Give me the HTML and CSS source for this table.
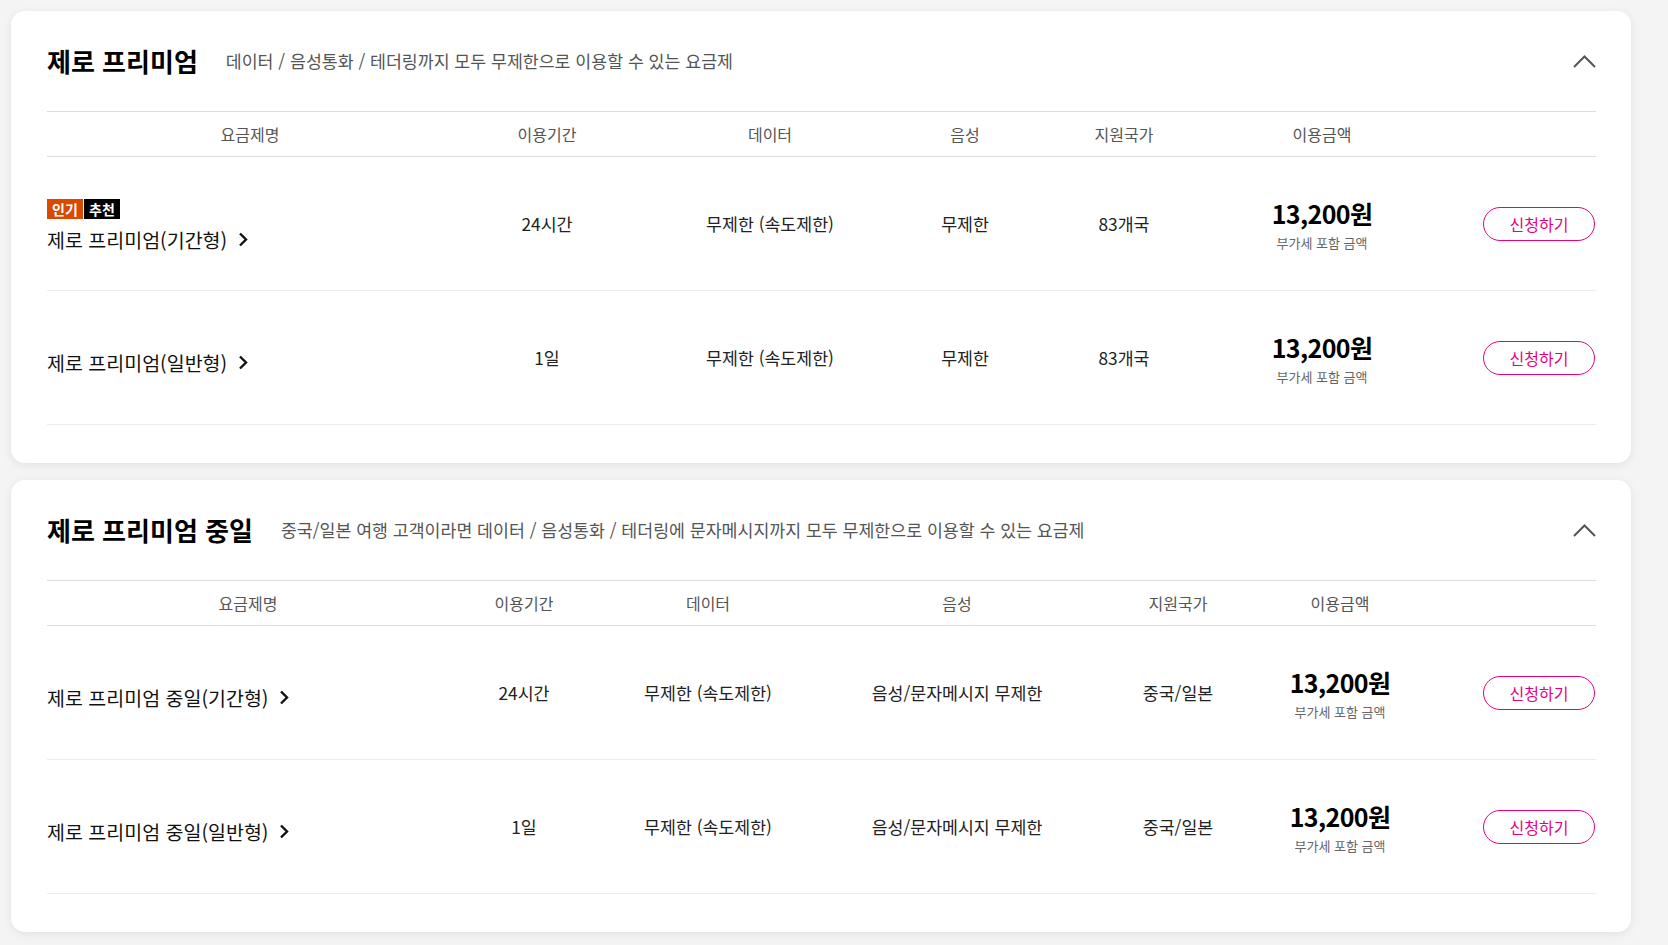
FILE: index.html
```html
<!DOCTYPE html>
<html lang="ko">
<head>
<meta charset="utf-8">
<title>제로 프리미엄 요금제</title>
<link rel="stylesheet" href="styles.css">
</head>
<body class="page">
<section class="plan-card">
  <div class="plan-head">
    <h2 class="plan-title">제로 프리미엄</h2>
    <p class="plan-desc">데이터 / 음성통화 / 테더링까지 모두 무제한으로 이용할 수 있는 요금제</p>
    <button class="toggle" type="button" aria-label="접기">
      <svg width="23" height="13" viewBox="0 0 23 13"><path d="M1 12 L11.5 1.5 L22 12" fill="none" stroke="#555" stroke-width="2"/></svg>
    </button>
  </div>
  <table class="plan-table t1">
    <colgroup><col class="a"><col class="b"><col class="c"><col class="d"><col class="e"><col class="f"><col class="g"></colgroup>
    <thead>
      <tr><th>요금제명</th><th>이용기간</th><th>데이터</th><th>음성</th><th>지원국가</th><th>이용금액</th><th></th></tr>
    </thead>
    <tbody>
      <tr>
        <td class="name-cell has-badge">
          <div class="badges"><span class="badge hot">인기</span><span class="badge rec">추천</span></div>
          <a class="plan-name" href="#">제로 프리미엄(기간형)<svg class="arrow" width="10" height="15" viewBox="0 0 10 15"><path d="M2 1.5 L8 7.5 L2 13.5" fill="none" stroke="#111" stroke-width="2.4"/></svg></a>
        </td>
        <td>24시간</td><td>무제한 (속도제한)</td><td>무제한</td><td>83개국</td>
        <td class="price-cell"><div class="price">13,200원</div><div class="vat">부가세 포함 금액</div></td>
        <td class="btn-cell"><button class="apply" type="button">신청하기</button></td>
      </tr>
      <tr>
        <td class="name-cell">
          <a class="plan-name" href="#">제로 프리미엄(일반형)<svg class="arrow" width="10" height="15" viewBox="0 0 10 15"><path d="M2 1.5 L8 7.5 L2 13.5" fill="none" stroke="#111" stroke-width="2.4"/></svg></a>
        </td>
        <td>1일</td><td>무제한 (속도제한)</td><td>무제한</td><td>83개국</td>
        <td class="price-cell"><div class="price">13,200원</div><div class="vat">부가세 포함 금액</div></td>
        <td class="btn-cell"><button class="apply" type="button">신청하기</button></td>
      </tr>
    </tbody>
  </table>
</section>

<section class="plan-card">
  <div class="plan-head">
    <h2 class="plan-title">제로 프리미엄 중일</h2>
    <p class="plan-desc">중국/일본 여행 고객이라면 데이터 / 음성통화 / 테더링에 문자메시지까지 모두 무제한으로 이용할 수 있는 요금제</p>
    <button class="toggle" type="button" aria-label="접기">
      <svg width="23" height="13" viewBox="0 0 23 13"><path d="M1 12 L11.5 1.5 L22 12" fill="none" stroke="#555" stroke-width="2"/></svg>
    </button>
  </div>
  <table class="plan-table t2">
    <colgroup><col class="a"><col class="b"><col class="c"><col class="d"><col class="e"><col class="f"><col class="g"></colgroup>
    <thead>
      <tr><th>요금제명</th><th>이용기간</th><th>데이터</th><th>음성</th><th>지원국가</th><th>이용금액</th><th></th></tr>
    </thead>
    <tbody>
      <tr>
        <td class="name-cell">
          <a class="plan-name" href="#">제로 프리미엄 중일(기간형)<svg class="arrow" width="10" height="15" viewBox="0 0 10 15"><path d="M2 1.5 L8 7.5 L2 13.5" fill="none" stroke="#111" stroke-width="2.4"/></svg></a>
        </td>
        <td>24시간</td><td>무제한 (속도제한)</td><td>음성/문자메시지 무제한</td><td>중국/일본</td>
        <td class="price-cell"><div class="price">13,200원</div><div class="vat">부가세 포함 금액</div></td>
        <td class="btn-cell"><button class="apply" type="button">신청하기</button></td>
      </tr>
      <tr>
        <td class="name-cell">
          <a class="plan-name" href="#">제로 프리미엄 중일(일반형)<svg class="arrow" width="10" height="15" viewBox="0 0 10 15"><path d="M2 1.5 L8 7.5 L2 13.5" fill="none" stroke="#111" stroke-width="2.4"/></svg></a>
        </td>
        <td>1일</td><td>무제한 (속도제한)</td><td>음성/문자메시지 무제한</td><td>중국/일본</td>
        <td class="price-cell"><div class="price">13,200원</div><div class="vat">부가세 포함 금액</div></td>
        <td class="btn-cell"><button class="apply" type="button">신청하기</button></td>
      </tr>
    </tbody>
  </table>
</section>
</body>
</html>
```

FILE: styles.css
```css
html, body {
  height: 100%;
}
.page {
  margin: 0;
  padding: 11px 37px 13px 11px;
  background: #f4f4f4;
  font-family: "Noto Sans CJK KR", "Noto Sans", sans-serif;
  color: #222;
  box-sizing: border-box;
  display: flex;
  flex-direction: column;
  gap: 17px;
}
.plan-card {
  background: #fff;
  border-radius: 14px;
  box-shadow: 0 2px 10px rgba(0, 0, 0, 0.08);
  padding: 0 35px 38px 36px;
}
.plan-head {
  height: 100px;
  display: flex;
  align-items: center;
  gap: 28px;
}
.plan-title {
  margin: 0;
  font-size: 26px;
  font-weight: 700;
  color: #000;
  line-height: 36px;
}
.plan-desc {
  margin: 0;
  font-size: 17.3px;
  color: #555;
  line-height: 26px;
}
.toggle {
  margin-left: auto;
  border: 0;
  background: none;
  padding: 0;
  display: flex;
  cursor: pointer;
}
.plan-table {
  width: 100%;
  border-collapse: collapse;
  table-layout: fixed;
  border-top: 1px solid #dcdcdc;
}
.t1 .a { width: 406px; }
.t1 .b { width: 188px; }
.t1 .c { width: 258px; }
.t1 .d { width: 132px; }
.t1 .e { width: 186px; }
.t1 .f { width: 210px; }
.t1 .g { width: 169px; }
.t2 .a { width: 402px; }
.t2 .b { width: 150px; }
.t2 .c { width: 218px; }
.t2 .d { width: 280px; }
.t2 .e { width: 162px; }
.t2 .f { width: 162px; }
.t2 .g { width: 175px; }
.plan-table th {
  height: 44px;
  padding: 0;
  font-size: 16px;
  font-weight: 400;
  color: #555;
  text-align: center;
  border-bottom: 1px solid #dcdcdc;
}
.plan-table td {
  height: 134px;
  padding: 0;
  font-size: 17.3px;
  color: #222;
  text-align: center;
  vertical-align: middle;
  border-bottom: 1px solid #ececec;
  box-sizing: border-box;
}
.plan-table td.name-cell {
  text-align: left;
  padding-top: 10px;
}
.plan-table td.name-cell.has-badge {
  padding-top: 4px;
}
.badges {
  display: flex;
  gap: 1px;
  margin-bottom: 8px;
}
.badge {
  display: inline-flex;
  align-items: center;
  justify-content: center;
  width: 36px;
  height: 20px;
  font-size: 14px;
  font-weight: 700;
  color: #fff;
}
.badge.hot { background: #d94a00; }
.badge.rec { background: #000; }
.plan-name {
  display: inline-flex;
  align-items: center;
  gap: 11px;
  font-size: 19.5px;
  line-height: 26px;
  color: #111;
  text-decoration: none;
}
.arrow {
  display: block;
}
.plan-table td.price-cell {
  padding-top: 2px;
}
.price {
  font-size: 25px;
  font-weight: 700;
  color: #000;
  line-height: 30px;
  letter-spacing: -0.6px;
}
.vat {
  margin-top: 7px;
  font-size: 13px;
  line-height: 16px;
  color: #666;
}
.plan-table td.btn-cell {
  text-align: right;
}
.apply {
  width: 112px;
  height: 34px;
  border: 1px solid #e6007e;
  border-radius: 17px;
  background: #fff;
  color: #e6007e;
  font-family: "Noto Sans CJK KR", "Noto Sans", sans-serif;
  font-size: 16px;
  padding: 0;
  margin-right: 1px;
  cursor: pointer;
}
```
